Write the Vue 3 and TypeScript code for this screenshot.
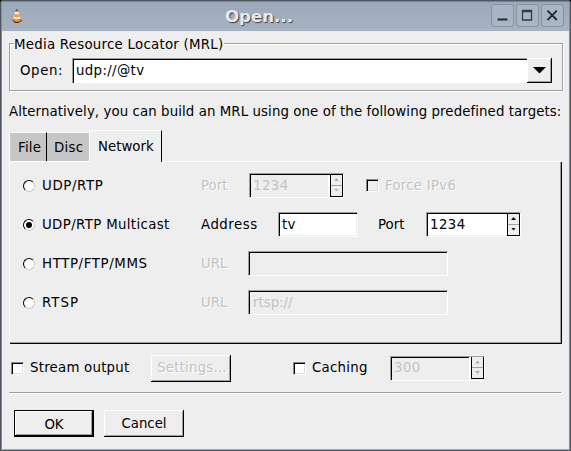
<script setup lang="ts">
import { ref } from 'vue'

const mrl = ref('udp://@tv')
const tabs = ['File', 'Disc', 'Network']
const activeTab = ref('Network')
const method = ref('multicast')
</script>

<template>
  <div class="window">
    <header class="titlebar">
      <svg class="cone" width="12" height="16" viewBox="0 0 12 16">
        <path d="M1 12 L6 10.5 L11.5 12.5 L7 15 L4 15 Z" fill="#3a2410" />
        <path d="M.5 11.5 L3 10 H9 L11.5 11.7 L7 14 H4.5 Z" fill="#f08a14" />
        <path d="M4.8 1 H6.8 L9.6 11 Q6 13.5 2.2 11 Z" fill="#f6ede0" />
        <path d="M4.8 1 H6.8 L7.6 3.8 H4 Z" fill="#a85c20" />
        <path d="M3.7 6 Q6 7 8.2 6 L8.9 8.5 Q6 9.8 3 8.5 Z" fill="#f39a2c" />
        <path d="M2.5 10.5 Q6 12.3 9.4 10.5 L9.7 11.5 Q6 13.5 2.2 11.5 Z" fill="#e57808" />
      </svg>
      <h1>Open...</h1>
      <div class="controls">
        <button><svg width="21" height="21"><path d="M5.5 14.5H15.5" stroke="#25282d" stroke-width="2" /></svg></button>
        <button><svg width="21" height="21"><path d="M5.5 5.5H14.5V15H5.5Z M5 6.5H15" fill="none" stroke="#353a42" stroke-width="1.3" /></svg></button>
        <button><svg width="21" height="21"><path d="M5.5 5.7L14.8 15M14.8 5.7L5.5 15" stroke="#25282d" stroke-width="1.8" /></svg></button>
      </div>
    </header>

    <main>
      <section class="group">
        <div class="legend"><span>Media Resource Locator (MRL)</span></div>
        <div class="mrl">
          <label>Open:</label>
          <div class="combo">
            <span class="value">{{ mrl }}</span>
            <button class="drop"><svg width="13" height="7"><path d="M0 0H13L6.5 6.5Z" /></svg></button>
          </div>
        </div>
      </section>

      <p class="hint">Alternatively, you can build an MRL using one of the following predefined targets:</p>

      <nav class="tabs">
        <button v-for="t in tabs" :key="t" class="tab" :class="[t.toLowerCase(), { active: t === activeTab }]" @click="activeTab = t">{{ t }}</button>
      </nav>

      <section class="panel">
        <div class="row">
          <i class="radio" :class="{ on: method === 'udp' }"></i>
          <span class="name wide" @click="method = 'udp'">UDP/RTP</span>
          <span class="lab w48 off">Port</span>
          <div class="field spin off-field"><span>1234</span><i class="steps"><b class="up"></b><b class="down"></b></i></div>
          <i class="check off-check ipv6"></i>
          <span class="off force">Force IPv6</span>
        </div>
        <div class="row">
          <i class="radio" :class="{ on: method === 'multicast' }"></i>
          <span class="name multicast" @click="method = 'multicast'">UDP/RTP Multicast</span>
          <span class="lab w77">Address</span>
          <div class="field address"><span>tv</span></div>
          <span class="lab port">Port</span>
          <div class="field spin"><span>1234</span><i class="steps"><b class="up"></b><b class="down"></b></i></div>
        </div>
        <div class="row">
          <i class="radio" :class="{ on: method === 'http' }"></i>
          <span class="name wide" @click="method = 'http'">HTTP/FTP/MMS</span>
          <span class="lab w47 off">URL</span>
          <div class="field url off-field"></div>
        </div>
        <div class="row">
          <i class="radio" :class="{ on: method === 'rtsp' }"></i>
          <span class="name rtsp" @click="method = 'rtsp'">RTSP</span>
          <span class="lab w47 off">URL</span>
          <div class="field url off-field"><span>rtsp://</span></div>
        </div>
      </section>

      <section class="options">
        <i class="check"></i>
        <span class="stream">Stream output</span>
        <button class="push settings"><span class="off">Settings...</span></button>
        <i class="check"></i>
        <span class="caching">Caching</span>
        <div class="field spin off-field"><span>300</span><i class="steps"><b class="up"></b><b class="down"></b></i></div>
      </section>

      <footer class="actions">
        <button class="push default">OK</button>
        <button class="push">Cancel</button>
      </footer>
    </main>
  </div>
</template>

<style>
body { background: #000; overflow: hidden; }
</style>

<style scoped>
* { box-sizing: border-box; }
.window {
  width: 571px; height: 451px; background: #eee; color: #000;
  border: 1px solid #505762; border-radius: 3px 3px 0 0;
  box-shadow: inset 0 -1px #a4a8af, inset 1px 0 #818b99, inset -1px 0 #818b99;
  font: 13.33px/16px "DejaVu Sans", sans-serif; white-space: nowrap;
}
button { font: inherit; color: inherit; padding: 0; margin: 0; border: 0; border-radius: 0; background: none; }
.titlebar {
  height: 30px; display: grid; grid-template-columns: 84px 1fr 79px; align-items: center;
  background: linear-gradient(#9ba8b9, #a8b3c2);
  box-shadow: inset 0 1px #78828f, inset 1px 0 #818b99, inset -1px 0 #818b99;
}
.cone { margin-left: 10px; }
h1 {
  margin: 0; text-align: center; font-size: 16.6px; line-height: 20px; font-weight: bold;
  color: #e8e8e8; text-shadow: 1px 1px 1px #3c424b; padding-right: 58px; padding-top: 1px;
}
.controls { display: flex; gap: 2px; padding-bottom: 1px; }
.controls button { width: 23px; height: 23px; border: 1px solid #8793a3; border-radius: 3px; background: #a9b5c4; }
.controls svg { display: block; }

main { padding: 4px 8px 0; display: flex; flex-direction: column; }
.group { height: 56px; display: flex; flex-direction: column; position: relative; }
.group::before {
  content: ""; position: absolute; inset: 8px 0 0 0; width: 552px;
  border: 1px solid #a0a0a0; box-shadow: inset 1px 1px #fff, 1px 1px #fff;
}
.legend { position: relative; height: 17px; padding-left: 5px; letter-spacing: .26px; }
.legend span { background: #eee; display: inline-block; line-height: 16px; padding: 2px 1px 0 0; }
.mrl { position: relative; display: flex; align-items: center; padding: 6px 0 0 11px; }
.mrl label { width: 52px; letter-spacing: .6px; }
.combo {
  width: 480px; height: 25px; background: #fff; display: flex; align-items: center;
  box-shadow: inset 0 1px #a0a0a0, inset 1px 0 #a0a0a0, inset 0 2px #000, inset 2px 0 #000;
}
.value { flex: 1; padding-left: 4px; letter-spacing: .35px; }
.drop {
  width: 25px; height: 25px; background: #eee; display: grid; place-items: center;
  box-shadow: inset -1px -1px #000, inset 1px 1px #fff, inset -2px -2px #a0a0a0;
}
.hint { margin: 13px 0 0; height: 16px; letter-spacing: .088px; }
.tabs { display: flex; align-items: flex-end; height: 41px; padding-left: 1px; }
.tab { background: #c6c6c6; height: 29px; border-top: 1px solid #fff; text-align: left; padding-top: 1px; }
.tab.file { width: 37px; border-right: 1px solid #000; padding-left: 8px; box-shadow: -1px 0 #fff; letter-spacing: .2px; }
.tab.disc { width: 42px; padding-left: 7px; letter-spacing: .3px; }
.tab.network { width: 73px; padding-left: 8px; border-right: 1px solid #000; }
.tab.active { background: #eee; height: 32px; border-left: 1px solid #fff; margin-bottom: -1px; position: relative; padding-top: 0; }
.panel {
  width: 553px; height: 183px; padding: 5px 0 0 14px;
  box-shadow: inset 1px 1px #fff, inset -1px -1px #000, inset -2px -2px #a0a0a0;
}
.row { height: 39px; display: flex; align-items: center; }
.radio {
  flex: none; width: 12px; height: 12px; border-radius: 50%; background: #fff;
  border: 1px solid; border-color: #000 #ccc #ccc #000; display: grid; place-items: center;
}
.radio.on::after { content: ""; width: 6px; height: 6px; border-radius: 50%; background: #000; }
.name { width: 159px; margin-left: 7px; }
.wide { letter-spacing: .62px; }
.multicast { letter-spacing: .36px; }
.rtsp { letter-spacing: 1px; }
.w48 { width: 48px; }
.w77 { width: 77px; letter-spacing: .5px; }
.w47 { width: 47px; }
.off { color: #c3c3c3; text-shadow: 1px 1px #fff; }
.force { letter-spacing: .25px; }
.field {
  height: 25px; background: #fff; display: flex; align-items: center; padding-left: 4px;
  border: 1px solid; border-color: #a0a0a0 #fff #fff #a0a0a0;
  box-shadow: inset 1px 1px #000, inset -1px -1px #eee;
}
.off-field { background: #eee; color: #c3c3c3; }
.spin { width: 95px; padding-left: 3px; justify-content: space-between; letter-spacing: .45px; }
.steps {
  width: 13px; height: 22px; border: solid #000; border-width: 0 1px 1px;
  background: linear-gradient(#eee 10px, #a0a0a0 10px, #a0a0a0 11px, #eee 11px);
  display: grid; grid-template-rows: 10px 11px; place-items: center;
}
.steps b { width: 5px; height: 3px; background: #000; }
.steps .up { clip-path: polygon(50% 0, 100% 100%, 0 100%); }
.steps .down { clip-path: polygon(0 0, 100% 0, 50% 100%); }
.off-field .steps b { background: #b0b0b0; }
.off-field .steps { box-shadow: -2px 0 #fff; }
.address { width: 80px; padding-left: 3px; letter-spacing: .3px; }
.port { margin-left: 20px; width: 48px; }
.url { width: 200px; }
.check {
  flex: none; width: 13px; height: 13px; background: #fff; border: 1px solid; border-color: #888 #fff #fff #888;
  box-shadow: inset 1px 1px #000, inset -1px -1px #ddd;
}
.off-check { background: #eee; }
.ipv6 { margin: 0 6px 0 22px; }
.options { height: 48px; display: flex; align-items: center; padding-left: 2px; }
.stream { margin-left: 6px; width: 121px; letter-spacing: .23px; }
.caching { margin-left: 6px; width: 78px; letter-spacing: .25px; }
.push {
  width: 80px; height: 27px; text-align: center;
  box-shadow: inset -1px -1px #000, inset 1px 1px #fff, inset -2px -2px #a0a0a0;
}
.settings { margin-right: 62px; padding-left: 2px; letter-spacing: .2px; }
.actions {
  border-top: 1px solid #a0a0a0; box-shadow: inset 0 1px #fff; display: flex; gap: 10px;
  width: 552px; padding: 17px 0 0 5px; letter-spacing: .2px;
}
.default { border: 1px solid #000; padding-top: 2px; }
</style>
